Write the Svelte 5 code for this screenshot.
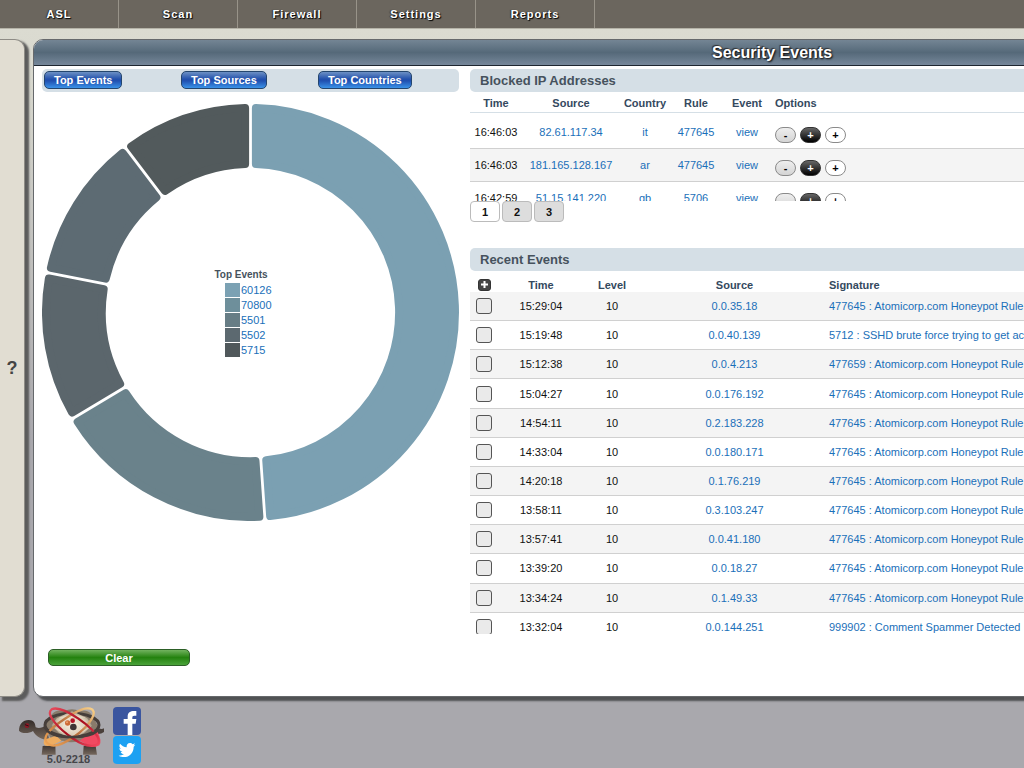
<script lang="ts">
  const navLinks = ['ASL', 'Scan', 'Firewall', 'Settings', 'Reports'];
  const chartTabs = ['Top Events', 'Top Sources', 'Top Countries'];

  const legend = [
    { id: '60126', color: '#7ba1b3' },
    { id: '70800', color: '#6e8f9b' },
    { id: '5501', color: '#677d85' },
    { id: '5502', color: '#5c6970' },
    { id: '5715', color: '#50585b' },
  ];

  // clockwise degrees from twelve o'clock
  const slices = [
    { from: 0, to: 176, color: '#7ba0b2' },
    { from: 176, to: 239.2, color: '#6a828b' },
    { from: 239.2, to: 281.1, color: '#5b666c' },
    { from: 281.1, to: 322.8, color: '#5d6b73' },
    { from: 322.8, to: 360, color: '#525a5c' },
  ];

  const blocked = [
    { time: '16:46:03', source: '82.61.117.34', country: 'it', rule: '477645' },
    { time: '16:46:03', source: '181.165.128.167', country: 'ar', rule: '477645' },
    { time: '16:42:59', source: '51.15.141.220', country: 'gb', rule: '5706' },
  ];

  const honeypot = 'Atomicorp.com Honeypot Rule';

  const events = [
    { time: '15:29:04', source: '0.0.35.18', signature: `477645 : ${honeypot}` },
    { time: '15:19:48', source: '0.0.40.139', signature: '5712 : SSHD brute force trying to get access' },
    { time: '15:12:38', source: '0.0.4.213', signature: `477659 : ${honeypot}` },
    { time: '15:04:27', source: '0.0.176.192', signature: `477645 : ${honeypot}` },
    { time: '14:54:11', source: '0.2.183.228', signature: `477645 : ${honeypot}` },
    { time: '14:33:04', source: '0.0.180.171', signature: `477645 : ${honeypot}` },
    { time: '14:20:18', source: '0.1.76.219', signature: `477645 : ${honeypot}` },
    { time: '13:58:11', source: '0.3.103.247', signature: `477645 : ${honeypot}` },
    { time: '13:57:41', source: '0.0.41.180', signature: `477645 : ${honeypot}` },
    { time: '13:39:20', source: '0.0.18.27', signature: `477645 : ${honeypot}` },
    { time: '13:34:24', source: '0.1.49.33', signature: `477645 : ${honeypot}` },
    { time: '13:32:04', source: '0.0.144.251', signature: '999902 : Comment Spammer Detected' },
  ];

  let page = $state(1);

  const CENTER = 209;
  const OUTER = 209;
  const INNER = 145;
  const CORNER = 4;
  const GAP = 1.4;

  function point(radius: number, angle: number) {
    return `${(CENTER + radius * Math.sin(angle)).toFixed(2)} ${(CENTER - radius * Math.cos(angle)).toFixed(2)}`;
  }

  // The slice is drawn smaller by CORNER and the round stroke fills it back out
  function slicePath(from: number, to: number) {
    const a = (from * Math.PI) / 180;
    const b = (to * Math.PI) / 180;
    const outer = OUTER - CORNER;
    const inner = INNER + CORNER;
    const dOuter = Math.asin((CORNER + GAP) / outer);
    const dInner = Math.asin((CORNER + GAP) / inner);
    return [
      `M${point(outer, a + dOuter)}`,
      `A${outer} ${outer} 0 0 1 ${point(outer, b - dOuter)}`,
      `L${point(inner, b - dInner)}`,
      `A${inner} ${inner} 0 0 0 ${point(inner, a + dInner)}Z`,
    ].join('');
  }
</script>

<div class="page">
  <nav class="topnav">
    {#each navLinks as link}
      <a href="#{link.toLowerCase()}">{link}</a>
    {/each}
  </nav>

  <div class="body">
    <aside class="drawer">
      <button class="help" aria-label="Help">?</button>
    </aside>

    <main class="panel">
      <h1>Security Events</h1>

      <div class="columns">
        <section class="chart-col">
          <div class="bar tabs">
            {#each chartTabs as tab}
              <div><button class="blue">{tab}</button></div>
            {/each}
          </div>

          <div class="chart">
            <svg viewBox="0 0 418 418" role="img" aria-label="Top Events">
              {#each slices as slice}
                <path
                  d={slicePath(slice.from, slice.to)}
                  fill={slice.color}
                  stroke={slice.color}
                  stroke-width={CORNER * 2}
                  stroke-linejoin="round"
                />
              {/each}
            </svg>
            <div class="legend">
              <h3>Top Events</h3>
              <ul>
                {#each legend as item}
                  <li>
                    <span class="swatch" style="background-color: {item.color}"></span>
                    <a href="#{item.id}">{item.id}</a>
                  </li>
                {/each}
              </ul>
            </div>
          </div>

          <button class="clear">Clear</button>
        </section>

        <section class="lists">
          <h2 class="bar">Blocked IP Addresses</h2>
          <div class="scroll blocked-box">
            <table class="blocked">
              <colgroup>
                <col class="w52" /><col class="w98" /><col class="w50" /><col class="w52" /><col class="w50" /><col />
              </colgroup>
              <thead>
                <tr>
                  <th>Time</th>
                  <th>Source</th>
                  <th>Country</th>
                  <th>Rule</th>
                  <th>Event</th>
                  <th class="left">Options</th>
                </tr>
              </thead>
              <tbody>
                {#each blocked as row}
                  <tr>
                    <td>{row.time}</td>
                    <td><a href="#source">{row.source}</a></td>
                    <td><a href="#country">{row.country}</a></td>
                    <td><a href="#rule">{row.rule}</a></td>
                    <td><a href="#view">view</a></td>
                    <td class="left">
                      <div class="options">
                        <button class="opt grey" aria-label="Unblock">-</button>
                        <button class="opt black" aria-label="Blacklist">+</button>
                        <button class="opt white" aria-label="Whitelist">+</button>
                      </div>
                    </td>
                  </tr>
                {/each}
              </tbody>
            </table>
          </div>
          <div class="pager">
            {#each [1, 2, 3] as n}
              <button class:current={page === n} onclick={() => (page = n)}>{n}</button>
            {/each}
          </div>

          <h2 class="bar">Recent Events</h2>
          <div class="scroll events-box">
            <table class="events">
              <colgroup>
                <col class="w28" /><col class="w86" /><col class="w56" /><col class="w188" /><col />
              </colgroup>
              <thead>
                <tr>
                  <th><button class="expand" aria-label="Select all">
                    <svg viewBox="0 0 11 10"><path d="M5.5 1v7M2 4.5h7" stroke="#fff" stroke-width="2" /></svg>
                  </button></th>
                  <th>Time</th>
                  <th>Level</th>
                  <th>Source</th>
                  <th class="left">Signature</th>
                </tr>
              </thead>
              <tbody>
                {#each events as event}
                  <tr>
                    <td><input type="checkbox" aria-label="Select event {event.time}" /></td>
                    <td>{event.time}</td>
                    <td>10</td>
                    <td><a href="#source">{event.source}</a></td>
                    <td class="left"><a href="#signature">{event.signature}</a></td>
                  </tr>
                {/each}
              </tbody>
            </table>
          </div>
        </section>
      </div>
    </main>
  </div>

  <footer>
    <div class="brand">
      <svg class="turtle" viewBox="57 228 258 150" aria-hidden="true">
        <defs>
          <linearGradient id="skin" x1="0" y1="0" x2="0" y2="1">
            <stop offset="0" stop-color="#342c29" />
            <stop offset="1" stop-color="#75675c" />
          </linearGradient>
          <linearGradient id="orange" x1="1" y1="0" x2="0" y2="1">
            <stop offset="0" stop-color="#fbd289" />
            <stop offset="0.5" stop-color="#b9713f" />
            <stop offset="1" stop-color="#f2a654" />
          </linearGradient>
          <linearGradient id="red" x1="0" y1="0" x2="1" y2="1">
            <stop offset="0" stop-color="#e84a5c" />
            <stop offset="0.5" stop-color="#a50d1c" />
            <stop offset="1" stop-color="#f4475f" />
          </linearGradient>
          <radialGradient id="shell">
            <stop offset="0" stop-color="#f8f0e2" />
            <stop offset="0.7" stop-color="#ddd0ba" />
            <stop offset="1" stop-color="#a3957f" />
          </radialGradient>
        </defs>
        <path d="M57 299C57 280 68 267 86 267C102 267 105 276 107 289C119 294 128 288 138 284L148 326C128 327 108 318 99 300C86 309 63 308 57 299Z" fill="url(#skin)" />
        <path d="M128 345L166 341L167 371H125Z M251 345L286 338L291 371H249Z" fill="url(#skin)" />
        <path d="M286 287Q302 297 312 292V303Q303 310 291 309Z" fill="#4a403b" />
        <path d="M157 248Q170 235 193 240Q216 229 239 240Q263 235 275 251L294 285L279 319Q259 336 237 329Q213 338 189 329Q166 335 150 319L135 285Z" fill="#887b6b" />
        <path d="M132 326Q126 353 158 342L185 329L168 314Z" fill="#eead61" />
        <path d="M262 312L293 303Q307 331 298 343Q287 351 257 339L239 329Z" fill="#f14961" />
        <ellipse cx="216" cy="282" rx="81" ry="35" fill="none" stroke="#463e3a" stroke-width="9" />
        <path d="M170 262L216 240L262 262L276 284L252 306L216 322L177 306L155 283Z" fill="url(#shell)" />
        <path d="M179 260L211 255L256 259M158 287L181 300L211 315L251 300L272 287M211 255L181 300M211 255L251 300" fill="none" stroke="#fff3df" stroke-width="2" opacity="0.6" />
        <path d="M151 342C107 321 171 277 221 247C264 222 292 230 277 260C258 298 182 354 151 342Z" fill="none" stroke="url(#orange)" stroke-width="7" />
        <path d="M155 235C135 249 174 292 220 323C257 349 302 353 296 326C289 293 185 219 155 235Z" fill="none" stroke="url(#red)" stroke-width="7" />
        <path d="M135 285C137 308 173 319 222 318C254 317 279 311 290 301" fill="none" stroke="#463e3a" stroke-width="8" />
        <circle cx="203" cy="276" r="8" fill="#cc6b35" />
        <circle cx="218" cy="269" r="7" fill="#b61425" />
        <circle cx="220" cy="288" r="10" fill="#3f3636" />
        <circle cx="201" cy="274" r="3" fill="#efa16e" />
        <circle cx="81" cy="284" r="7" fill="#8e1725" />
        <path d="M75 281l11 4" stroke="#231416" stroke-width="3" />
      </svg>
      <span class="version">5.0-2218</span>
    </div>
    <div class="social">
      <a href="#facebook" aria-label="Facebook">
        <svg viewBox="0 0 84 84">
          <rect width="84" height="84" rx="12" fill="#3a559f" />
          <path d="M44 84V50H32V36H44V29C44 17 52 12 63 12H70V26H64C59 26 58 28 58 32V36H70L68 50H58V84Z" fill="#fff" />
        </svg>
      </a>
      <a href="#twitter" aria-label="Twitter">
        <svg viewBox="0 0 84 84">
          <rect width="84" height="84" rx="12" fill="#1da1f2" />
          <path d="M67 26C65 27 63 28 61 28C63 27 65 24 66 22C64 23 62 24 59 25C57 22 54 21 51 21C44 21 40 27 41 34C33 33 26 29 21 23C17 29 20 35 24 38C22 38 20 37 19 36C19 42 23 46 28 47C26 48 24 48 23 47C24 51 28 54 33 54C28 58 23 59 17 59C39 71 62 57 62 32C64 30 66 28 67 26Z" fill="#fff" />
        </svg>
      </a>
    </div>
  </footer>
</div>

<style>
  :global(body) {
    background-color: #a9a8ad;
  }

  .page {
    overflow: hidden;
    min-height: 100vh;
    font-family: Arial, 'Liberation Sans', sans-serif;
    font-size: 11px;
    color: #111;
    background: linear-gradient(#dbdbd1 28px, #d9d9cf 70px, #a9a8ad 440px);
  }

  a {
    color: #1a6fb9;
    text-decoration: none;
  }

  button {
    padding: 0;
    font-family: inherit;
    font-size: 11px;
    font-weight: bold;
    cursor: pointer;
  }

  h1,
  h2,
  h3,
  ul {
    margin: 0;
    padding: 0;
  }

  .topnav {
    display: flex;
    height: 28px;
    background-color: #6b665e;
    border-bottom: 1px solid #b5b3a8;
  }

  .topnav a {
    box-sizing: border-box;
    width: 119px;
    border-right: 1px solid #989389;
    line-height: 28px;
    text-align: center;
    font-weight: bold;
    letter-spacing: 1px;
    color: #fff;
    text-shadow: 1px 1px 1px #000, -1px 0 1px #333;
  }

  .body {
    display: flex;
    gap: 8px;
    margin-top: 10px;
  }

  .drawer {
    display: flex;
    align-items: center;
    box-sizing: border-box;
    width: 25px;
    flex-shrink: 0;
    background-color: #e1ddd2;
    border: 1px solid #8e8c86;
    border-left: 0;
    border-radius: 0 10px 10px 0;
    box-shadow: 3px 3px 2px 1px #5c5c5c;
  }

  .help {
    width: 24px;
    border: 0;
    background: none;
    font-size: 18px;
    color: #444;
  }

  .panel {
    box-sizing: border-box;
    flex: 1 0 1478px;
    min-width: 0;
    background-color: #fff;
    border: 1px solid #66696c;
    border-radius: 10px;
    box-shadow: 4px 4px 2px #505254;
  }

  h1 {
    height: 25px;
    border-bottom: 1px solid #1e2630;
    border-radius: 9px 9px 0 0;
    background: linear-gradient(#748594, #556979 50%, #76879a);
    line-height: 25px;
    text-align: center;
    font-size: 16px;
    color: #fff;
    text-shadow: 1px 1px 2px #000, -1px -1px 1px #333;
  }

  .columns {
    display: flex;
    gap: 11px;
    padding: 3px 8px 30px;
  }

  .chart-col {
    width: 417px;
    flex-shrink: 0;
  }

  .lists {
    flex: 1;
    min-width: 0;
  }

  .bar {
    box-sizing: border-box;
    height: 23px;
    background-color: #d5dfe6;
    border-radius: 5px;
  }

  h2.bar {
    padding-left: 10px;
    line-height: 23px;
    font-size: 13px;
    color: #46525d;
  }

  .tabs {
    display: grid;
    grid-template-columns: repeat(3, 137px);
    padding: 2px;
  }

  .blue {
    display: block;
    height: 18px;
    padding: 0 9px;
    border: 1px solid #24466f;
    border-radius: 5px;
    background: linear-gradient(#6c90c4, #2250ac 45%, #2050b0 55%, #3a92e8);
    color: #fff;
  }

  .chart {
    position: relative;
    margin-top: 12px;
  }

  .chart svg {
    display: block;
    width: 100%;
  }

  .legend {
    position: absolute;
    top: 164px;
    left: 171px;
    width: 56px;
  }

  h3 {
    line-height: 14px;
    text-align: center;
    font-size: 10px;
    color: #46525d;
    white-space: nowrap;
  }

  .legend ul {
    padding-left: 12px;
    list-style: none;
  }

  .legend li {
    display: flex;
    align-items: center;
    gap: 1px;
    height: 15px;
  }

  .swatch {
    width: 15px;
    height: 14px;
    flex-shrink: 0;
  }

  .clear {
    display: block;
    width: 142px;
    height: 17px;
    margin: 128px 0 0 6px;
    border: 1px solid #2c5f26;
    border-radius: 5px;
    background: linear-gradient(#72b35f, #24820f 50%, #4aa23a);
    color: #fff;
  }

  .scroll {
    overflow: hidden;
  }

  .blocked-box {
    height: 109px;
  }

  .events-box {
    height: 362px;
    padding-top: 1px;
  }

  table {
    width: 100%;
    table-layout: fixed;
    border-collapse: separate;
    border-spacing: 0;
  }

  th,
  td {
    padding: 0;
    text-align: center;
    white-space: nowrap;
  }

  th {
    color: #34495e;
  }

  .left {
    text-align: left;
  }

  .w28 {
    width: 28px;
  }

  .w50 {
    width: 50px;
  }

  .w52 {
    width: 52px;
  }

  .w56 {
    width: 56px;
  }

  .w86 {
    width: 86px;
  }

  .w98 {
    width: 98px;
  }

  .w188 {
    width: 189px;
  }

  .blocked th {
    box-sizing: border-box;
    height: 21px;
    padding-top: 2px;
    border-bottom: 1px solid #d5dfe6;
  }

  .blocked td {
    height: 32px;
    border-bottom: 1px solid #d0d0d0;
  }

  .blocked tbody tr:first-child td {
    padding-top: 3px;
  }

  .blocked .left {
    padding-left: 3px;
  }

  .blocked tbody tr:nth-child(even),
  .events tbody tr:nth-child(odd) {
    background-color: #f4f4f4;
  }

  .options {
    display: flex;
    gap: 4px;
    padding-top: 5px;
  }

  .opt {
    width: 21px;
    height: 16px;
    border: 1px solid #8a8a8a;
    border-radius: 8px;
    line-height: 14px;
  }

  .grey {
    background: linear-gradient(#eee, #d4d4d4);
  }

  .black {
    border-color: #333;
    background: linear-gradient(#666, #000);
    color: #fff;
  }

  .white {
    background-color: #fff;
  }

  .pager {
    display: flex;
    gap: 2px;
    margin-bottom: 26px;
  }

  .pager button {
    width: 30px;
    height: 21px;
    border: 1px solid #bbb;
    border-radius: 4px;
    background-color: #ddd;
    color: #111;
  }

  .pager .current {
    background-color: #fff;
  }

  .events {
    height: 370px;
  }

  .events th {
    height: 20px;
    padding-top: 5px;
    box-sizing: border-box;
  }

  .events td {
    border-bottom: 1px solid #d0d0d0;
  }

  .expand {
    display: block;
    width: 13px;
    height: 12px;
    margin: 0 auto;
    border: 1px solid #333;
    border-radius: 3px;
    background-color: #444;
  }

  .expand svg {
    display: block;
    width: 11px;
    height: 10px;
  }

  input {
    display: block;
    box-sizing: border-box;
    width: 16px;
    height: 16px;
    margin: 0 auto;
    appearance: none;
    border: 1px solid #555;
    border-radius: 3px;
    background-color: #eaeaea;
  }

  footer {
    display: flex;
    gap: 9px;
    padding: 10px 19px 4px;
  }

  .brand {
    width: 85px;
  }

  .turtle {
    display: block;
    width: 86px;
    height: 50px;
  }

  .version {
    position: relative;
    display: block;
    margin-top: -4px;
    padding-left: 14px;
    line-height: 12px;
    text-align: center;
    font-weight: bold;
    color: #46464a;
  }

  .social {
    display: flex;
    flex-direction: column;
    gap: 1px;
  }

  .social svg {
    display: block;
    width: 28px;
    height: 28px;
  }
</style>
